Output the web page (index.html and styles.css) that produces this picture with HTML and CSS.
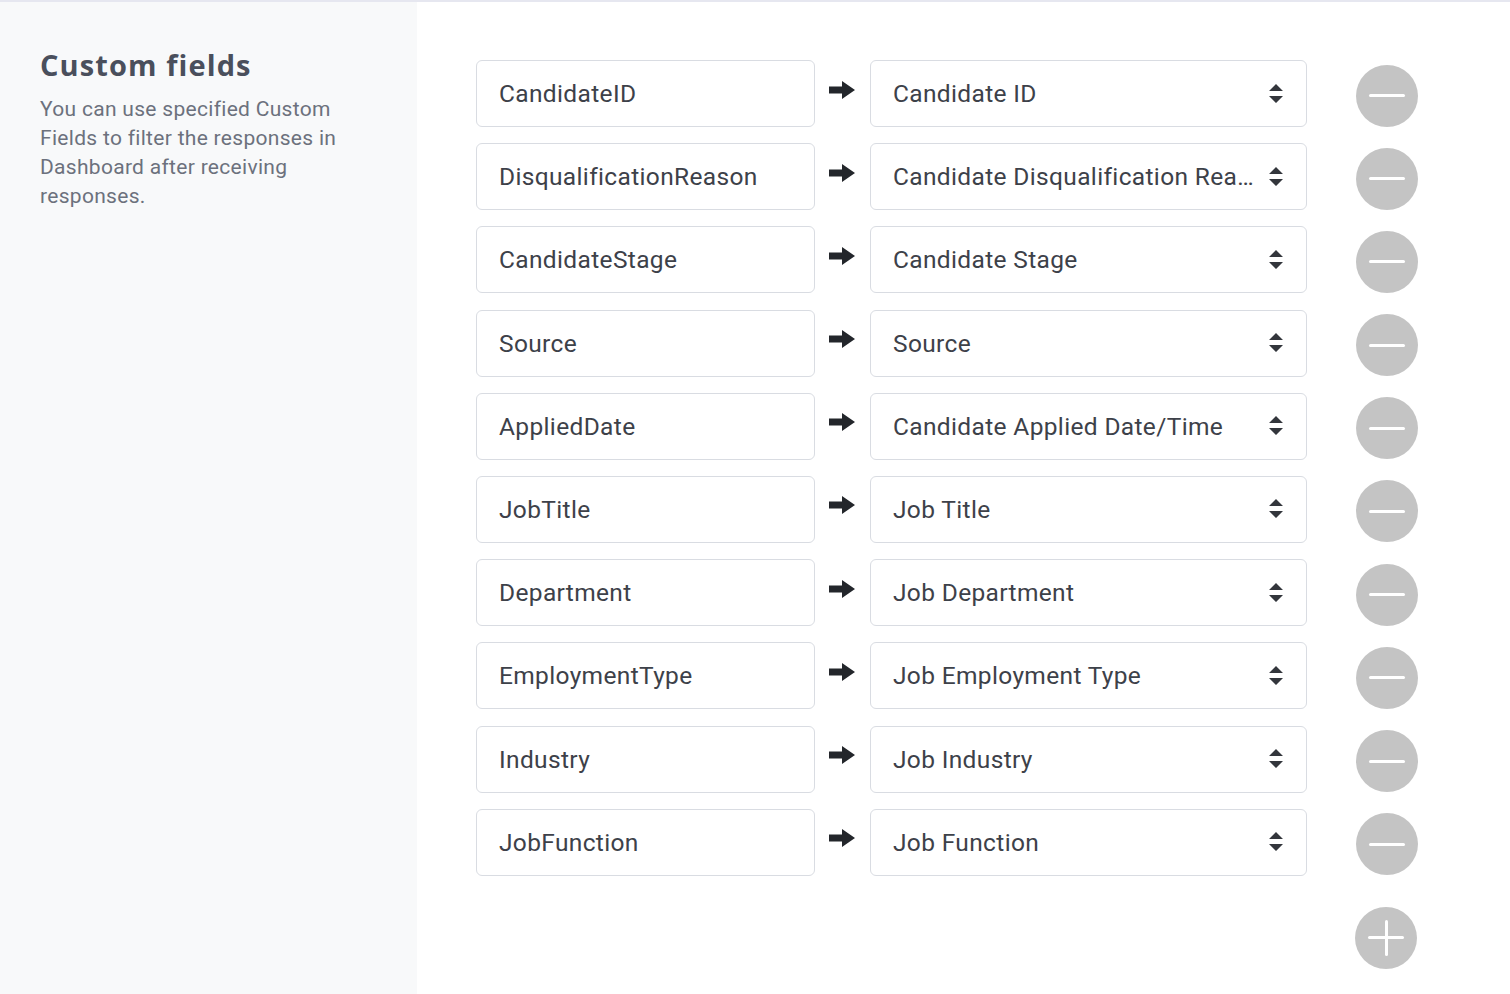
FILE: index.html
```html
<!DOCTYPE html>
<html>
	<head>
		<meta charset="utf-8">
		<title>Custom fields</title>
		<link rel="stylesheet" href="styles.css">
	</head>
	<body>
		<div class="cf_Page">
			<div class="cf_Side">
				<h2 class="cf_Title">Custom fields</h2>
				<p class="cf_Desc">You can use specified Custom Fields to filter the responses in Dashboard after receiving responses.</p>
			</div>
			<div class="cf_Main">
				<div class="cf_Row">
					<div class="cf_Input">CandidateID</div>
					<svg class="cf_Arrow" viewBox="0 0 26 20"><path d="M0 6.5h13V1l13 9-13 9v-5.5H0z"/></svg>
					<div class="cf_Select"><span>Candidate ID</span><svg class="cf_Caret" viewBox="0 0 14 20"><path d="M7 0l7 7H0zM0 12h14l-7 7z"/></svg></div>
					<div class="cf_Btn cf_Minus"></div>
				</div>
				<div class="cf_Row">
					<div class="cf_Input">DisqualificationReason</div>
					<svg class="cf_Arrow" viewBox="0 0 26 20"><path d="M0 6.5h13V1l13 9-13 9v-5.5H0z"/></svg>
					<div class="cf_Select"><span>Candidate Disqualification Reason</span><svg class="cf_Caret" viewBox="0 0 14 20"><path d="M7 0l7 7H0zM0 12h14l-7 7z"/></svg></div>
					<div class="cf_Btn cf_Minus"></div>
				</div>
				<div class="cf_Row">
					<div class="cf_Input">CandidateStage</div>
					<svg class="cf_Arrow" viewBox="0 0 26 20"><path d="M0 6.5h13V1l13 9-13 9v-5.5H0z"/></svg>
					<div class="cf_Select"><span>Candidate Stage</span><svg class="cf_Caret" viewBox="0 0 14 20"><path d="M7 0l7 7H0zM0 12h14l-7 7z"/></svg></div>
					<div class="cf_Btn cf_Minus"></div>
				</div>
				<div class="cf_Row">
					<div class="cf_Input">Source</div>
					<svg class="cf_Arrow" viewBox="0 0 26 20"><path d="M0 6.5h13V1l13 9-13 9v-5.5H0z"/></svg>
					<div class="cf_Select"><span>Source</span><svg class="cf_Caret" viewBox="0 0 14 20"><path d="M7 0l7 7H0zM0 12h14l-7 7z"/></svg></div>
					<div class="cf_Btn cf_Minus"></div>
				</div>
				<div class="cf_Row">
					<div class="cf_Input">AppliedDate</div>
					<svg class="cf_Arrow" viewBox="0 0 26 20"><path d="M0 6.5h13V1l13 9-13 9v-5.5H0z"/></svg>
					<div class="cf_Select"><span>Candidate Applied Date/Time</span><svg class="cf_Caret" viewBox="0 0 14 20"><path d="M7 0l7 7H0zM0 12h14l-7 7z"/></svg></div>
					<div class="cf_Btn cf_Minus"></div>
				</div>
				<div class="cf_Row">
					<div class="cf_Input">JobTitle</div>
					<svg class="cf_Arrow" viewBox="0 0 26 20"><path d="M0 6.5h13V1l13 9-13 9v-5.5H0z"/></svg>
					<div class="cf_Select"><span>Job Title</span><svg class="cf_Caret" viewBox="0 0 14 20"><path d="M7 0l7 7H0zM0 12h14l-7 7z"/></svg></div>
					<div class="cf_Btn cf_Minus"></div>
				</div>
				<div class="cf_Row">
					<div class="cf_Input">Department</div>
					<svg class="cf_Arrow" viewBox="0 0 26 20"><path d="M0 6.5h13V1l13 9-13 9v-5.5H0z"/></svg>
					<div class="cf_Select"><span>Job Department</span><svg class="cf_Caret" viewBox="0 0 14 20"><path d="M7 0l7 7H0zM0 12h14l-7 7z"/></svg></div>
					<div class="cf_Btn cf_Minus"></div>
				</div>
				<div class="cf_Row">
					<div class="cf_Input">EmploymentType</div>
					<svg class="cf_Arrow" viewBox="0 0 26 20"><path d="M0 6.5h13V1l13 9-13 9v-5.5H0z"/></svg>
					<div class="cf_Select"><span>Job Employment Type</span><svg class="cf_Caret" viewBox="0 0 14 20"><path d="M7 0l7 7H0zM0 12h14l-7 7z"/></svg></div>
					<div class="cf_Btn cf_Minus"></div>
				</div>
				<div class="cf_Row">
					<div class="cf_Input">Industry</div>
					<svg class="cf_Arrow" viewBox="0 0 26 20"><path d="M0 6.5h13V1l13 9-13 9v-5.5H0z"/></svg>
					<div class="cf_Select"><span>Job Industry</span><svg class="cf_Caret" viewBox="0 0 14 20"><path d="M7 0l7 7H0zM0 12h14l-7 7z"/></svg></div>
					<div class="cf_Btn cf_Minus"></div>
				</div>
				<div class="cf_Row">
					<div class="cf_Input">JobFunction</div>
					<svg class="cf_Arrow" viewBox="0 0 26 20"><path d="M0 6.5h13V1l13 9-13 9v-5.5H0z"/></svg>
					<div class="cf_Select"><span>Job Function</span><svg class="cf_Caret" viewBox="0 0 14 20"><path d="M7 0l7 7H0zM0 12h14l-7 7z"/></svg></div>
					<div class="cf_Btn cf_Minus"></div>
				</div>
				<div class="cf_AddRow">
					<div class="cf_Btn cf_Plus"></div>
				</div>
			</div>
		</div>
	</body>
</html>
```

FILE: styles.css
```css
body {
	margin: 0;
	font-family: Roboto, "Liberation Sans", sans-serif;
	background: #fff;
}

.cf_Page {
	display: flex;
	min-height: 100vh;
	border-top: 2px solid #e6e7f0;
	box-sizing: border-box;
}

.cf_Side {
	width: 417px;
	flex-shrink: 0;
	background: #f8f9fa;
	padding: 44px 60px 0 40px;
	box-sizing: border-box;
}

.cf_Title {
	margin: 0;
	font-family: "Open Sans", Lato, sans-serif;
	font-weight: 700;
	font-size: 29px;
	letter-spacing: 1.1px;
	line-height: 38px;
	color: #4a4f5c;
}

.cf_Desc {
	margin: 11px 0 0;
	font-size: 21px;
	letter-spacing: 0.3px;
	line-height: 29px;
	color: #6c717d;
}

.cf_Main {
	padding: 58px 0 0 59px;
	display: flex;
	flex-direction: column;
	gap: 16.2px;
}

.cf_Row {
	display: flex;
	align-items: center;
	height: 67px;
}

.cf_Input,
.cf_Select {
	height: 67px;
	box-sizing: border-box;
	border: 1.5px solid #d9dce2;
	border-radius: 6px;
	background: #fff;
	font-size: 24.5px;
	letter-spacing: 0.35px;
	color: #3d4149;
	display: flex;
	align-items: center;
}

.cf_Input {
	width: 339px;
	padding-left: 22px;
}

.cf_Arrow {
	width: 26px;
	height: 20px;
	margin: 0 15px 0 14px;
	position: relative;
	top: -4px;
	fill: #23262b;
}

.cf_Select {
	width: 437px;
	padding: 0 23px 0 22px;
	justify-content: space-between;
}

.cf_Select span {
	white-space: nowrap;
	overflow: hidden;
	text-overflow: ellipsis;
	max-width: 366px;
}

.cf_Caret {
	width: 14px;
	height: 20px;
	flex-shrink: 0;
	margin-left: 10px;
	fill: #33363c;
}

.cf_Btn {
	width: 62px;
	height: 62px;
	border-radius: 50%;
	background: #c4c4c4;
	margin-left: 49px;
	position: relative;
	top: 2px;
	flex-shrink: 0;
}

.cf_Btn::before,
.cf_Plus::after {
	content: "";
	position: absolute;
	left: 13px;
	top: 29.5px;
	width: 36px;
	height: 3px;
	border-radius: 2px;
	background: #fff;
}

.cf_Plus::after {
	left: 29.5px;
	top: 13px;
	width: 3px;
	height: 36px;
}

.cf_AddRow {
	display: flex;
	padding-left: 879px;
	margin-top: 15px;
}

.cf_AddRow .cf_Btn {
	margin-left: 0;
	top: 0;
}
```
